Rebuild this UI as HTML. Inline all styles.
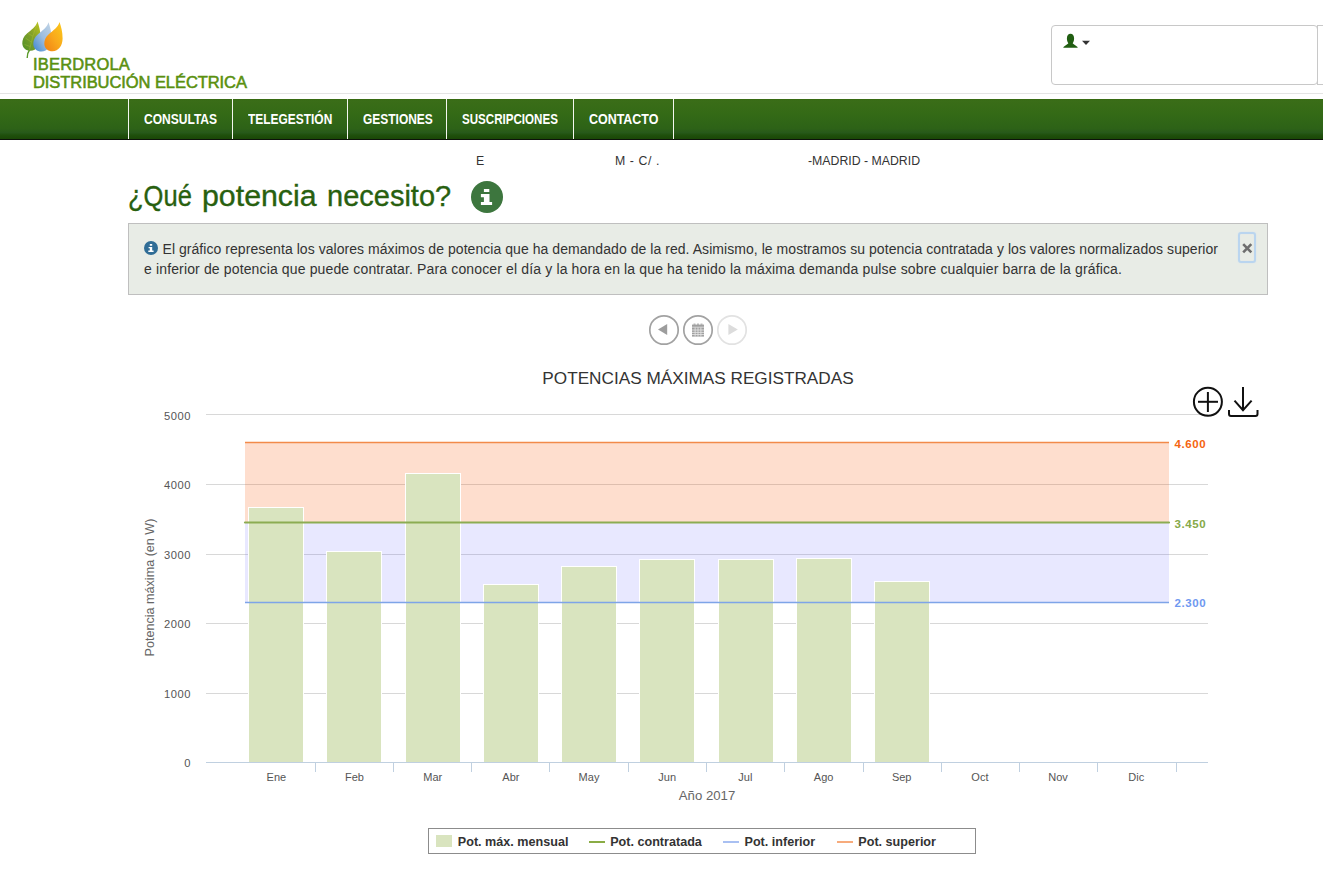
<!DOCTYPE html>
<html><head><meta charset="utf-8">
<style>
*{margin:0;padding:0;box-sizing:border-box}
html,body{width:1323px;height:884px;overflow:hidden;background:#fff;font-family:"Liberation Sans",sans-serif}
.abs{position:absolute}
#hdrline{left:0;top:93px;width:1323px;height:1px;background:#e4e4e4}
.brand{color:#5a900f;font-size:16.5px;line-height:18px;white-space:nowrap;letter-spacing:-0.15px;-webkit-text-stroke:0.55px #5a900f}
#userbox{left:1051px;top:25px;width:267px;height:60px;border:1px solid #c8c8c8;border-radius:4px}
#userbox2{left:1317px;top:25px;width:20px;height:60px;border:1px solid #c8c8c8;border-radius:0}
#nav{left:0;top:99px;width:1323px;height:41px;background:linear-gradient(#36690f 0%,#3a6d18 4%,#346a16 35%,#2d6217 72%,#27591a 82%,#1f500c 88%,#1a4707 97.5%,#0d120b 97.6%,#0d120b 100%)}
.sep{top:99px;width:1px;height:40px;background:#f4f7f0}
.nav{top:111px;color:#fff;font-weight:bold;font-size:14px;letter-spacing:0;white-space:nowrap;line-height:16px;transform-origin:0 0}
.addr{top:153.7px;font-size:12.3px;color:#333;white-space:nowrap;line-height:14px}
.tt{top:176px;transform-origin:0 0;font-size:29px;color:#28600f;-webkit-text-stroke:0.35px #28600f;white-space:nowrap;line-height:40px}
#infoc{left:471px;top:181px;width:32px;height:32px;border-radius:50%;background:#3d763e}
#alert{left:128px;top:223px;width:1140px;height:72px;background:#e8ece6;border:1px solid #bfbfbf}
.atxt{font-size:14px;color:#333;letter-spacing:0.05px;white-space:nowrap;line-height:20px}
#closering{left:1238px;top:232px;width:18px;height:31px;border:2px solid #bad5ef;border-radius:3px;box-shadow:0 0 1.5px #cfe0f0, inset 0 0 1px #cfe0f0}
</style></head>
<body>
<!-- logo leaves -->
<svg class="abs" style="left:0;top:0" width="260" height="94" viewBox="0 0 260 94">
  <defs>
    <linearGradient id="lg1" x1="1" y1="0" x2="0" y2="1"><stop offset="0" stop-color="#c2c81e"/><stop offset="0.45" stop-color="#84a12a"/><stop offset="1" stop-color="#4f9028"/></linearGradient>
    <linearGradient id="lg2" x1="1" y1="0" x2="0" y2="1"><stop offset="0" stop-color="#c4d6e6"/><stop offset="0.5" stop-color="#9dbde0"/><stop offset="1" stop-color="#3d86d0"/></linearGradient>
    <linearGradient id="lg3" x1="1" y1="0" x2="0" y2="1"><stop offset="0" stop-color="#fbcb1a"/><stop offset="0.5" stop-color="#f9a91c"/><stop offset="1" stop-color="#f07f15"/></linearGradient>
  </defs>
  <path transform="translate(37.5,21.5)" d="M0,0 C-1.5,5.5 -6.5,8.5 -10.5,12 C-14,15 -15.3,18.5 -15.2,22 C-15,26.5 -11.5,29.3 -7,29.3 C-1,29.3 3.1,23.5 3.1,16.5 C3.1,9.5 1.5,4.5 0,0 Z" fill="url(#lg1)"/>
  <path d="M29.5,50 C31,43 33.5,33 37.2,23.5 M31.2,42 L25.5,38 M32.8,36 L28,33.5 M30.3,46.5 L24.5,44.5" stroke="#bccb3a" stroke-width="0.7" fill="none" opacity="0.45"/>
  <path d="M29.5,50 C28,52 27,55 27.2,58" stroke="#5a9a2a" stroke-width="1.4" fill="none"/>
  <path transform="translate(48.5,22.2)" d="M0,0 C-1.5,5.5 -6.5,8.5 -10.5,12 C-14,15 -15.3,18.5 -15.2,22 C-15,26.5 -11.5,29.3 -7,29.3 C-1,29.3 3.1,23.5 3.1,16.5 C3.1,9.5 1.5,4.5 0,0 Z" fill="url(#lg2)"/>
  <path transform="translate(59.5,22)" d="M0,0 C-1.5,5.5 -6.5,8.5 -10.5,12 C-14,15 -15.3,18.5 -15.2,22 C-15,26.5 -11.5,29.3 -7,29.3 C-1,29.3 3.1,23.5 3.1,16.5 C3.1,9.5 1.5,4.5 0,0 Z" fill="url(#lg3)"/>
</svg>
<div class="abs brand" style="left:33px;top:55px;letter-spacing:0.18px">IBERDROLA</div>
<div class="abs brand" style="left:33px;top:73px;letter-spacing:-0.07px">DISTRIBUCIÓN ELÉCTRICA</div>

<div class="abs" id="userbox"></div>
<div class="abs" id="userbox2"></div>
<svg class="abs" style="left:1060px;top:30px" width="36" height="22" viewBox="0 0 36 22">
  <path d="M10.5,3.8 C8.3,3.8 6.9,5.7 6.9,8.4 C6.9,10.6 7.6,12 8.2,12.9 L8.2,13.6 L4.1,16.5 C3.6,16.9 3.3,17.3 3.3,17.8 L17.7,17.8 C17.7,17.3 17.4,16.9 16.9,16.5 L12.8,13.6 L12.8,12.9 C13.4,12 14.1,10.6 14.1,8.4 C14.1,5.7 12.7,3.8 10.5,3.8 Z" fill="#215e12"/>
  <path d="M22,10.8 L30,10.8 L26,14.9 Z" fill="#333"/>
</svg>
<div class="abs" id="hdrline"></div>

<div class="abs" id="nav"></div>
<div class="abs sep" style="left:128px"></div>
<div class="abs sep" style="left:232px"></div>
<div class="abs sep" style="left:347px"></div>
<div class="abs sep" style="left:446px"></div>
<div class="abs sep" style="left:573px"></div>
<div class="abs sep" style="left:673px"></div>
<div class="abs nav" style="left:144px;transform:scaleX(0.859)">CONSULTAS</div>
<div class="abs nav" style="left:247.5px;transform:scaleX(0.853)">TELEGESTIÓN</div>
<div class="abs nav" style="left:362.5px;transform:scaleX(0.855)">GESTIONES</div>
<div class="abs nav" style="left:462px;transform:scaleX(0.827)">SUSCRIPCIONES</div>
<div class="abs nav" style="left:589px;transform:scaleX(0.89)">CONTACTO</div>

<div class="abs addr" style="left:476px">E</div>
<div class="abs addr" style="left:615px;letter-spacing:0.6px">M - C/ .</div>
<div class="abs addr" style="left:808px">-MADRID - MADRID</div>

<div class="abs tt" style="left:128px;transform:scaleX(0.88)">¿Qué</div>
<div class="abs tt" style="left:201.5px;transform:scaleX(1.045)">potencia</div>
<div class="abs tt" style="left:327px">necesito?</div>
<div class="abs" id="infoc"></div>
<svg class="abs" style="left:471px;top:181px" width="32" height="32" viewBox="0 0 32 32">
  <path d="M12.9,8 h5.4 v3 h-5.4 z M9.9,13.1 h8.6 v7.9 h2.6 v3.1 h-11.2 v-3.1 h3 v-4.8 h-3 z" fill="#fff"/>
</svg>

<div class="abs" id="alert"></div>
<svg class="abs" style="left:144px;top:241px" width="14" height="14" viewBox="0 0 14 14">
  <circle cx="7" cy="7" r="7" fill="#306d96"/>
  <path d="M5.8,3 h2.4 v1.8 h-2.4 z M4.6,6 h3.6 v3.4 h1.4 v1.5 h-5.3 v-1.5 h1.5 v-2.2 h-1.2 z" fill="#fff"/>
</svg>
<div class="abs atxt" style="left:162.5px;top:239px">El gráfico representa los valores máximos de potencia que ha demandado de la red. Asimismo, le mostramos su potencia contratada y los valores normalizados superior</div>
<div class="abs atxt" style="left:144px;top:259px;letter-spacing:0.14px">e inferior de potencia que puede contratar. Para conocer el día y la hora en la que ha tenido la máxima demanda pulse sobre cualquier barra de la gráfica.</div>
<div class="abs" id="closering"></div>
<svg class="abs" style="left:1238px;top:240px" width="18" height="16" viewBox="0 0 18 16">
  <path d="M5.2,4.2 L13.3,12.3 M13.3,4.2 L5.2,12.3" stroke="#6e6e6e" stroke-width="2.6"/>
</svg>

<!-- date nav buttons -->
<svg class="abs" style="left:640px;top:310px" width="120" height="40" viewBox="640 310 120 40">
  <circle cx="664" cy="330" r="14.2" fill="none" stroke="#a2a2a2" stroke-width="1.7"/>
  <circle cx="698" cy="330" r="14.2" fill="none" stroke="#a2a2a2" stroke-width="1.7"/>
  <circle cx="732" cy="330" r="14.2" fill="none" stroke="#e2e2e2" stroke-width="1.7"/>
  <path d="M658,329.5 L667.2,324 L667.2,335 Z" fill="#9d9d9d"/>
  <path d="M728.4,324 L737.8,329.5 L728.4,335 Z" fill="#dcdcdc"/>
  <g fill="#a0a0a0">
    <rect x="692" y="324.6" width="12" height="2.2"/>
    <rect x="692" y="327.4" width="12" height="9.2"/>
  </g>
  <g fill="#e8e8e8">
    <rect x="692" y="329.6" width="12" height="0.8"/>
    <rect x="692" y="331.9" width="12" height="0.8"/>
    <rect x="692" y="334.2" width="12" height="0.8"/>
    <rect x="694.7" y="327.4" width="0.8" height="9.2"/>
    <rect x="697.6" y="327.4" width="0.8" height="9.2"/>
    <rect x="700.5" y="327.4" width="0.8" height="9.2"/>
  </g>
  <g fill="#a8a8a8"><rect x="693.5" y="323.6" width="2" height="1.2"/><rect x="697" y="323.6" width="2" height="1.2"/><rect x="700.5" y="323.6" width="2" height="1.2"/></g>
</svg>

<!-- CHART -->
<svg class="abs" style="left:0;top:360px" width="1323" height="524" viewBox="0 360 1323 524" font-family="Liberation Sans, sans-serif">
  <text x="698" y="384" text-anchor="middle" font-size="17.2" fill="#333">POTENCIAS MÁXIMAS REGISTRADAS</text>
  <!-- gridlines -->
  <g stroke="#d8d8d8" stroke-width="1">
    <line x1="206" y1="414.5" x2="1208" y2="414.5"/>
    <line x1="206" y1="484.5" x2="1208" y2="484.5"/>
    <line x1="206" y1="554.5" x2="1208" y2="554.5"/>
    <line x1="206" y1="623.5" x2="1208" y2="623.5"/>
    <line x1="206" y1="693.5" x2="1208" y2="693.5"/>
  </g>
  <!-- bands -->
  <rect x="245" y="442.5" width="924" height="80" fill="#fc5a0a" fill-opacity="0.2"/>
  <rect x="245" y="522.5" width="924" height="80" fill="#4b4bff" fill-opacity="0.13"/>
  <!-- bars -->
  <g fill="#d9e4bf" stroke="#fff" stroke-width="1">
    <rect x="248.5" y="507.5" width="55" height="256"/>
    <rect x="326.5" y="551.5" width="55" height="212"/>
    <rect x="405.5" y="473.5" width="55" height="290"/>
    <rect x="483.5" y="584.5" width="55" height="179"/>
    <rect x="561.5" y="566.5" width="55" height="197"/>
    <rect x="639.5" y="559.5" width="55" height="204"/>
    <rect x="718.5" y="559.5" width="55" height="204"/>
    <rect x="796.5" y="558.5" width="55" height="205"/>
    <rect x="874.5" y="581.5" width="55" height="182"/>
  </g>
  <!-- lines -->
  <line x1="245" y1="442.5" x2="1169" y2="442.5" stroke="#f28a4a" stroke-width="1.3"/>
  <line x1="245" y1="522.5" x2="1169" y2="522.5" stroke="#8cac52" stroke-width="2.2" stroke-linecap="round"/>
  <line x1="245" y1="602.5" x2="1169" y2="602.5" stroke="#7ea4e8" stroke-width="1.3"/>
  <!-- x axis -->
  <line x1="206" y1="762.5" x2="1208" y2="762.5" stroke="#c0d0e0" stroke-width="1"/>
  <g stroke="#c0d0e0" stroke-width="1">
    <line x1="315.5" y1="762" x2="315.5" y2="772"/>
    <line x1="393.5" y1="762" x2="393.5" y2="772"/>
    <line x1="471.5" y1="762" x2="471.5" y2="772"/>
    <line x1="549.5" y1="762" x2="549.5" y2="772"/>
    <line x1="628.5" y1="762" x2="628.5" y2="772"/>
    <line x1="706.5" y1="762" x2="706.5" y2="772"/>
    <line x1="784.5" y1="762" x2="784.5" y2="772"/>
    <line x1="863.5" y1="762" x2="863.5" y2="772"/>
    <line x1="941.5" y1="762" x2="941.5" y2="772"/>
    <line x1="1019.5" y1="762" x2="1019.5" y2="772"/>
    <line x1="1097.5" y1="762" x2="1097.5" y2="772"/>
    <line x1="1176.5" y1="762" x2="1176.5" y2="772"/>
  </g>
  <!-- y labels -->
  <g font-size="11.2" fill="#555" text-anchor="end" letter-spacing="0.5">
    <text x="191" y="420.2">5000</text>
    <text x="191" y="489.2">4000</text>
    <text x="191" y="558.6">3000</text>
    <text x="191" y="628">2000</text>
    <text x="191" y="697.5">1000</text>
    <text x="191" y="767.2">0</text>
  </g>
  <text transform="translate(154.3,587.5) rotate(-90)" text-anchor="middle" font-size="12.6" fill="#666">Potencia máxima (en W)</text>
  <!-- x labels -->
  <g font-size="11" fill="#555" text-anchor="middle">
    <text x="276.4" y="781">Ene</text>
    <text x="354.5" y="781">Feb</text>
    <text x="432.7" y="781">Mar</text>
    <text x="510.9" y="781">Abr</text>
    <text x="589" y="781">May</text>
    <text x="667.2" y="781">Jun</text>
    <text x="745.4" y="781">Jul</text>
    <text x="823.6" y="781">Ago</text>
    <text x="901.7" y="781">Sep</text>
    <text x="979.9" y="781">Oct</text>
    <text x="1058.1" y="781">Nov</text>
    <text x="1136.3" y="781">Dic</text>
  </g>
  <text x="707" y="800" text-anchor="middle" font-size="13.2" fill="#666">Año 2017</text>
  <!-- plotline labels -->
  <g font-size="11.5" font-weight="bold" letter-spacing="0.55">
    <text x="1174.6" y="448" fill="#f5640f">4.600</text>
    <text x="1174.6" y="528" fill="#86a948">3.450</text>
    <text x="1174.6" y="607" fill="#6f98f0">2.300</text>
  </g>
  <!-- export icons -->
  <g stroke="#111" stroke-width="2" fill="none" stroke-linecap="butt">
    <circle cx="1207.9" cy="401.8" r="14"/>
    <line x1="1198" y1="401.8" x2="1218" y2="401.8"/>
    <line x1="1207.9" y1="392" x2="1207.9" y2="412"/>
    <line x1="1243" y1="387" x2="1243" y2="410"/>
    <polyline points="1234.5,400.7 1243,410.2 1251.6,400.7"/>
    <path d="M1229,410 V414 Q1229,416 1231,416 H1255.5 Q1257.5,416 1257.5,414 V410"/>
  </g>
  <!-- legend -->
  <rect x="428.5" y="828.5" width="547" height="25" fill="#fff" stroke="#8c8c8c" stroke-width="1"/>
  <rect x="436" y="835" width="16" height="12" fill="#d9e4bf"/>
  <line x1="589" y1="842" x2="605" y2="842" stroke="#8aac45" stroke-width="2"/>
  <line x1="723" y1="842" x2="739" y2="842" stroke="#a9c0f2" stroke-width="2"/>
  <line x1="837" y1="842" x2="853" y2="842" stroke="#f7ab7c" stroke-width="2"/>
  <g font-size="12.6" font-weight="bold" fill="#333">
    <text x="457.8" y="846">Pot. máx. mensual</text>
    <text x="610.2" y="846">Pot. contratada</text>
    <text x="744.5" y="846">Pot. inferior</text>
    <text x="858.3" y="846">Pot. superior</text>
  </g>
</svg>
</body></html>
